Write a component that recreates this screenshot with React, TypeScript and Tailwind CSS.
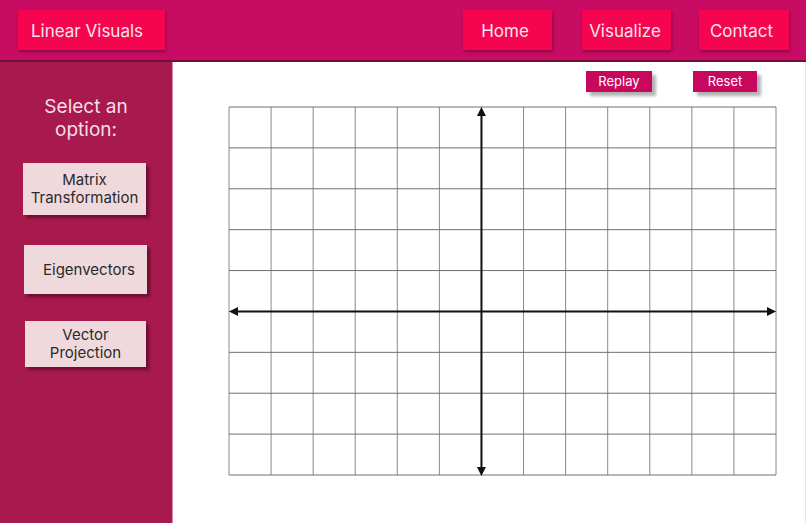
import React from 'react';

const COLS = 13;
const ROWS = 9;
const W = 547;
const H = 368;

function Grid() {
  const cw = W / COLS;
  const rh = H / ROWS;
  const ax = cw * 6;
  const ay = rh * 5;
  return (
    <svg width={W + 2} height={H + 2} viewBox={`-1 -1 ${W + 2} ${H + 2}`} className="block">
      {Array.from({ length: COLS + 1 }).map((_, i) => (
        <line key={'v' + i} x1={i * cw} y1={0} x2={i * cw} y2={H} stroke="#8a8a8a" strokeWidth={1} />
      ))}
      {Array.from({ length: ROWS + 1 }).map((_, i) => (
        <line key={'h' + i} x1={0} y1={i * rh} x2={W} y2={i * rh} stroke="#6f6f6f" strokeWidth={1} />
      ))}
      <line x1={ax} y1={6} x2={ax} y2={H - 6} stroke="#111" strokeWidth={2} />
      <polygon points={`${ax},0 ${ax - 4.5},9 ${ax + 4.5},9`} fill="#111" />
      <polygon points={`${ax},${H + 1} ${ax - 4.5},${H - 8} ${ax + 4.5},${H - 8}`} fill="#111" />
      <line x1={6} y1={ay} x2={W - 6} y2={ay} stroke="#111" strokeWidth={2} />
      <polygon points={`0,${ay} 9,${ay - 4.5} 9,${ay + 4.5}`} fill="#111" />
      <polygon points={`${W},${ay} ${W - 9},${ay - 4.5} ${W - 9},${ay + 4.5}`} fill="#111" />
    </svg>
  );
}

function NavButton({ label, className = '' }: { label: string; className?: string }) {
  return (
    <button
      className={`h-10 pt-[3px] bg-[#f5044f] text-[#fbe3ec] text-[17px] shadow-[1px_2px_3px_rgba(80,0,30,0.45)] ${className}`}
    >
      {label}
    </button>
  );
}

function OptionButton({ children, className = '' }: { children: React.ReactNode; className?: string }) {
  return (
    <button
      className={`bg-[#f0d9dd] text-[#2a2a2a] text-[15px] leading-[18px] shadow-[3px_3px_3px_rgba(60,0,20,0.55)] ${className}`}
    >
      {children}
    </button>
  );
}

function SmallButton({ label, className = '' }: { label: string; className?: string }) {
  return (
    <button
      className={`h-[21px] bg-[#c8085c] text-white text-[13px] shadow-[4px_4px_3px_rgba(0,0,0,0.3)] ${className}`}
    >
      {label}
    </button>
  );
}

export default function App() {
  return (
    <div className="w-[806px] h-[523px] flex flex-col overflow-hidden bg-white" style={{ fontFamily: 'Inter, "Noto Sans", sans-serif' }}>
      <header className="h-[62px] shrink-0 bg-[#c80c64] border-b-2 border-[#6e1038] flex items-start pt-[10px] pl-[18px]">
        <NavButton label="Linear Visuals" className="w-[147px] pr-[9px]" />
        <NavButton label="Home" className="w-[89px] pr-[5px] ml-[298px]" />
        <NavButton label="Visualize" className="w-[89px] pr-[3px] ml-[30px]" />
        <NavButton label="Contact" className="w-[90px] pr-[5px] ml-[28px]" />
      </header>
      <div className="flex flex-1 min-h-0">
        <aside className="w-[173px] shrink-0 bg-[#a81a4e] border-r border-[#d58aa4] flex flex-col items-start">
          <h2 className="w-[172px] text-center text-[19px] leading-[23px] text-[#f7dde6] mt-[33px]">
            Select an
            <br />
            option:
          </h2>
          <OptionButton className="w-[123px] h-[52px] ml-[23px] mt-[22px]">
            Matrix
            <br />
            Transformation
          </OptionButton>
          <OptionButton className="w-[123px] h-[49px] pl-[7px] ml-[24px] mt-[30px]">Eigenvectors</OptionButton>
          <OptionButton className="w-[121px] h-[46px] ml-[25px] mt-[27px]">
            Vector
            <br />
            Projection
          </OptionButton>
        </aside>
        <main className="flex-1 flex flex-col border-r border-[#e6e6e6]">
          <div className="flex pt-[9px]">
            <SmallButton label="Replay" className="w-[66px] ml-[413px]" />
            <SmallButton label="Reset" className="w-[64px] ml-[41px]" />
          </div>
          <div className="ml-[55px] mt-[14px]">
            <Grid />
          </div>
        </main>
      </div>
    </div>
  );
}
